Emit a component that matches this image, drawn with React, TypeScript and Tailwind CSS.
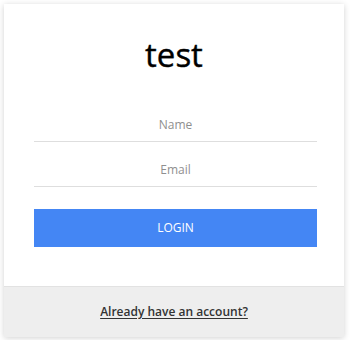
const App = () => {
    return (
        <div className="min-h-screen bg-white p-1" style={{ fontFamily: '"Open Sans", "Noto Sans", sans-serif' }}>
            <div className="w-[340px] bg-white shadow-[0_1px_6px_rgba(0,0,0,0.18)] flex flex-col">
                <div className="pt-[31px] pb-[39px] pl-[30px] pr-[27px]">
                    <h1 className="text-[33px] leading-[40px] font-medium text-center text-black pr-[3px] [-webkit-text-stroke:0.4px_black]">test</h1>

                    <form className="mt-[33px] flex flex-col" onSubmit={(e) => e.preventDefault()}>
                        <input
                            type="text"
                            placeholder="Name"
                            className="h-[34px] w-full border-b border-[#dedede] text-center text-[12px] text-[#555] placeholder:text-[#8f8f8f] outline-none"
                        />
                        <input
                            type="email"
                            placeholder="Email"
                            className="mt-[11px] h-[34px] w-full border-b border-[#dedede] text-center text-[12px] text-[#555] placeholder:text-[#8f8f8f] outline-none"
                        />
                        <button
                            type="submit"
                            className="mt-[22px] h-[38px] w-full bg-[#4486f4] text-white text-[12px] uppercase"
                        >
                            Login
                        </button>
                    </form>
                </div>

                <div className="h-[51px] bg-[#eeeeee] border-t border-[#e2e2e2] flex items-center justify-center">
                    <a href="#" className="text-[12px] font-semibold text-[#333] underline underline-offset-2">
                        Already have an account?
                    </a>
                </div>
            </div>
        </div>
    );
};

export default App;
